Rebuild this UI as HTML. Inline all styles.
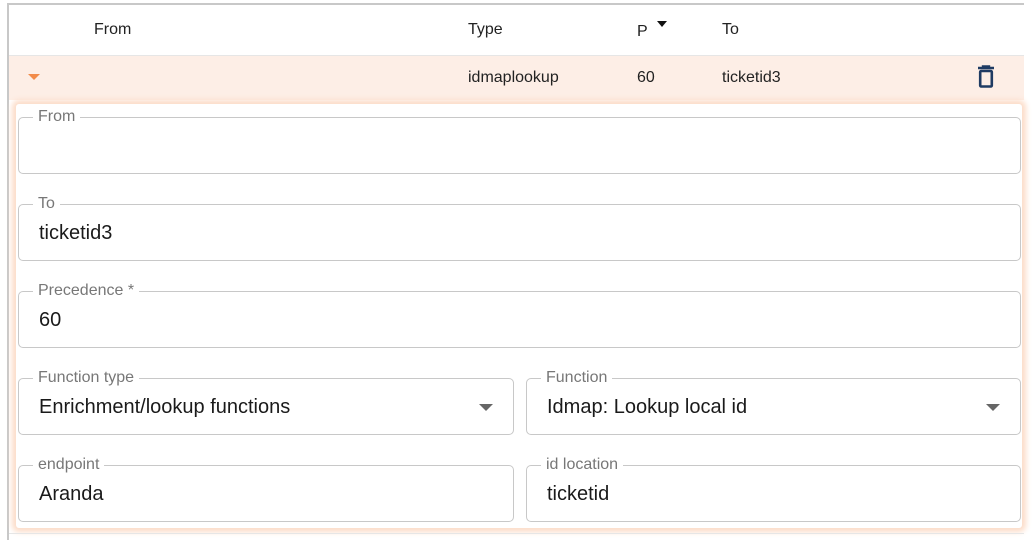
<!DOCTYPE html>
<html><head><style>
body{margin:0;width:1032px;height:540px;background:#fff;font-family:"Liberation Sans",sans-serif;position:relative;overflow:hidden}
.a{position:absolute}
.hd{font-size:16px;color:#222}
.box{position:absolute;border:1px solid #c8c8c8;border-radius:5px;height:57px;box-sizing:border-box}
.lbl{position:absolute;top:-10px;left:14px;padding:0 5px;background:#fff;font-size:16px;color:#777;line-height:18px}
.val{position:absolute;left:20px;top:16px;font-size:20px;color:#1a1a1a;line-height:24px}
.arr{position:absolute;right:20px;top:25px;width:0;height:0;border-left:7px solid transparent;border-right:7px solid transparent;border-top:7px solid #666}
</style></head><body>
<div class="a" style="left:7px;top:3px;width:1017px;height:2px;background:#c8c8c8"></div>
<div class="a" style="left:7px;top:3px;width:2px;height:537px;background:#c8c8c8"></div>
<div class="a hd" style="left:94px;top:21px">From</div>
<div class="a hd" style="left:468px;top:21px">Type</div>
<div class="a hd" style="left:637px;top:23px">P</div>
<div class="a" style="left:657px;top:21px;border-left:5px solid transparent;border-right:5px solid transparent;border-top:6px solid #111"></div>
<div class="a hd" style="left:722px;top:21px">To</div>
<div class="a" style="left:9px;top:55px;width:1015px;height:1px;background:#e6e6e6"></div>
<div class="a" style="left:9px;top:56px;width:1015px;height:44px;background:#fdeee6"></div>
<div class="a" style="left:28px;top:74px;border-left:6px solid transparent;border-right:6px solid transparent;border-top:6px solid #f28b4a"></div>
<div class="a" style="left:468px;top:69px;font-size:16px;color:#222">idmaplookup</div>
<div class="a" style="left:637px;top:69px;font-size:16px;color:#222">60</div>
<div class="a" style="left:722px;top:69px;font-size:16px;color:#222">ticketid3</div>
<svg class="a" style="left:976px;top:65px" width="20" height="24" viewBox="0 0 20 24"><path d="M2 3h16M7 3V1.5h6V3" stroke="#1f3b63" stroke-width="2.4" fill="none"/><rect x="4.2" y="6" width="11.6" height="15.5" rx="1" stroke="#1f3b63" stroke-width="2.6" fill="none"/></svg>
<div class="a" style="left:16px;top:104px;width:1006px;height:424px;background:#fff;border-radius:3px;box-shadow:0 0 6px 4px #fcdcc8"></div>
<div class="a" style="left:9px;top:533px;width:1015px;height:1px;background:#e6e6e6"></div>

<div class="box" style="left:18px;top:117px;width:1003px"><span class="lbl">From</span></div>
<div class="box" style="left:18px;top:204px;width:1003px"><span class="lbl">To</span><span class="val">ticketid3</span></div>
<div class="box" style="left:18px;top:291px;width:1003px"><span class="lbl">Precedence *</span><span class="val">60</span></div>
<div class="box" style="left:18px;top:378px;width:496px"><span class="lbl">Function type</span><span class="val">Enrichment/lookup functions</span><span class="arr"></span></div>
<div class="box" style="left:526px;top:378px;width:495px"><span class="lbl">Function</span><span class="val">Idmap: Lookup local id</span><span class="arr"></span></div>
<div class="box" style="left:18px;top:465px;width:496px"><span class="lbl">endpoint</span><span class="val">Aranda</span></div>
<div class="box" style="left:526px;top:465px;width:495px"><span class="lbl">id location</span><span class="val">ticketid</span></div>
</body></html>
